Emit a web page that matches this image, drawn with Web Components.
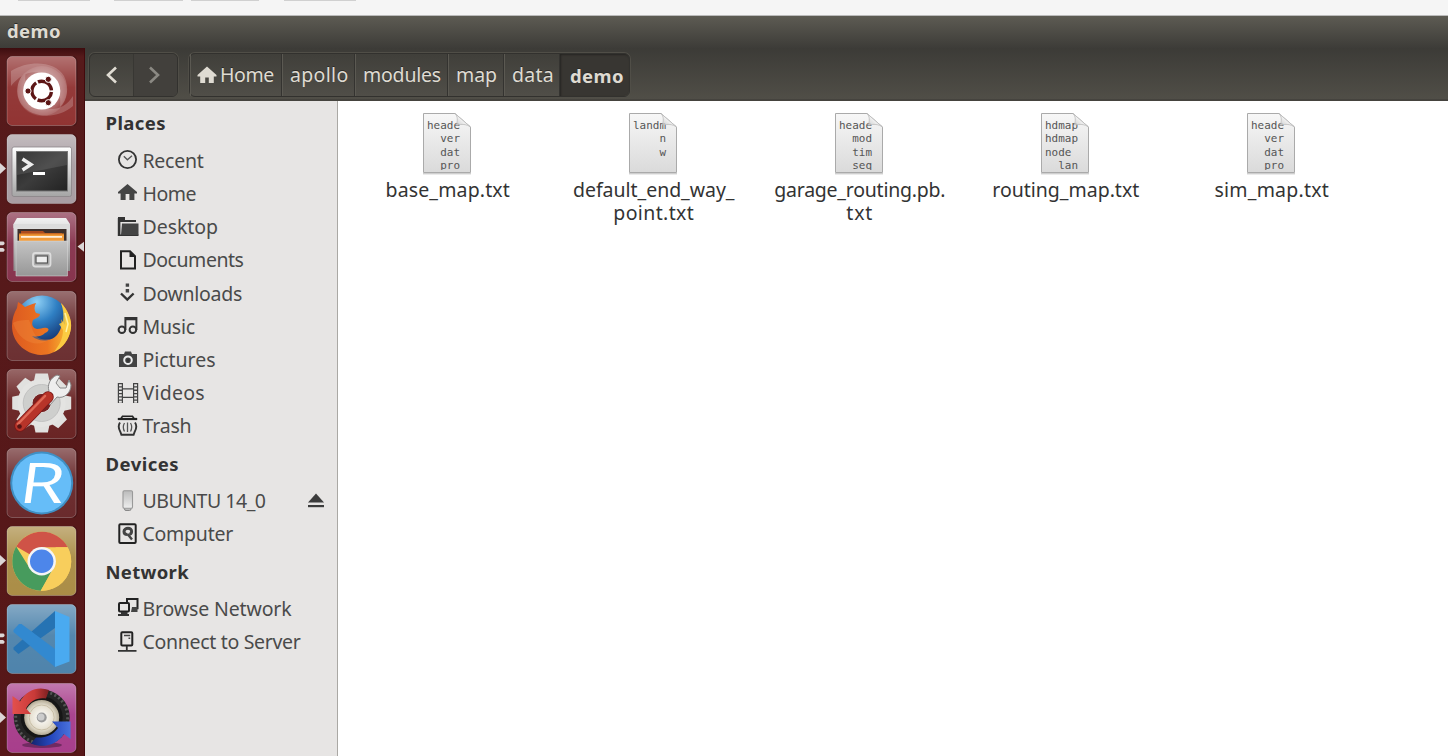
<!DOCTYPE html>
<html lang="en">
<head>
<meta charset="utf-8">
<title>demo</title>
<style>
html,body{margin:0;height:100%;overflow:hidden}
body{font-family:"Noto Sans","Open Sans",sans-serif}
</style>
</head>
<body>
<desktop-window></desktop-window>
<script>
const mount = (el, html) => { el.attachShadow({mode:"open"}).innerHTML = html; };

/* Label whose letter spacing is tuned so that its text takes a given width. */
class FitText extends HTMLElement {
  connectedCallback(){
    mount(this, `<style>:host{display:inline-block;white-space:pre;flex:none}span{display:inline-block}</style><span><slot></slot></span>`);
    const s = this.shadowRoot.querySelector("span");
    const want = parseFloat(this.getAttribute("w"));
    const n = this.textContent.length;
    const d = (want - s.getBoundingClientRect().width) / n;
    s.style.letterSpacing = d.toFixed(3) + "px";
  }
}

const SIDE = {
recent:`<circle cx="10.5" cy="10.5" r="8.6" fill="none" stroke="#333" stroke-width="1.8"/><path d="M6.8 7.2 10.4 10.8 15 6.8" fill="none" stroke="#555" stroke-width="1.3"/>`,
home:`<path d="M10.5 2 1 10v1.6h2.6V18h5v-6h3.8v6h5v-6.4H20V10Z" fill="#444"/>`,
desktop:`<path d="M1 1h7v3h11v2H3.4v13H1Z" fill="#333"/><path d="M1 19.2h20.5M1.6 2v18" stroke="#333" stroke-width="1.6"/><path d="M5 7.5h16.5V19H4Z" fill="#444"/>`,
documents:`<path d="M4 2.2h9l5 5V19.5H4Z" fill="none" stroke="#222" stroke-width="2"/><path d="M12.5 2v6H18Z" fill="#222"/>`,
downloads:`<path d="M4 11.5l6.3 6 6.3-6" fill="none" stroke="#333" stroke-width="2.4"/><path d="M8.7 1.5h3.4v3.2H8.7zM8.7 7h3.4v3.5H8.7z" fill="#444"/>`,
music:`<path d="M8.4 15V3h11v12M8.4 4.2h11" fill="none" stroke="#333" stroke-width="2"/><circle cx="4.9" cy="14.7" r="3.3" fill="none" stroke="#333" stroke-width="2"/><circle cx="15.9" cy="14.7" r="3.3" fill="none" stroke="#333" stroke-width="2"/>`,
pictures:`<path d="M2 5h5l1-2.5h6L15 5h5v13H2Z" fill="#444"/><circle cx="11" cy="11.2" r="3.8" fill="none" stroke="#eee" stroke-width="2"/><circle cx="11" cy="11.2" r="1.5" fill="#333"/>`,
videos:`<path d="M1.4 1v20M5.4 1v20M16.6 1v20M20.6 1v20M5.4 6.8h11M5.4 15.4h11" fill="none" stroke="#444" stroke-width="1.2"/><path d="M3.4 1v20M18.6 1v20" stroke="#444" stroke-width="3.2" stroke-dasharray="1.3 2"/>`,
trash:`<path d="M.800 4h19.400" stroke="#222" stroke-width="2.200"/><path d="M4 3.500 5.500 1.300h10L17 3.500" fill="none" stroke="#222" stroke-width="1.600"/><path d="M3 7.500c-1.800 2.600-1.600 6 .4 9.500l1 2.800h12.200l1-2.800c2-3.500 2.200-6.900.4-9.500" fill="none" stroke="#333" stroke-width="1.9"/><path d="M7.500 8q-2.400 4 0 8.500M10.500 7.500v9.500M13.500 8q2.400 4 0 8.500" fill="none" stroke="#555" stroke-width="1.3"/>`,
usb:`<defs><linearGradient id="u" x2="0" y2="1"><stop offset="0" stop-color="#bbb"/><stop offset="1" stop-color="#eee"/></linearGradient></defs><path d="M7.500 17h6.500v2q0 1.500-1.500 1.500H9q-1.500 0-1.500-1.500Z" fill="#bbb" stroke="#888"/><rect x="6" y="0.700" width="9.500" height="17.500" rx="1.300" fill="url(#u)" stroke="#999" stroke-width="1.100"/>`,
computer:`<rect x="2.300" y="1.300" width="16.400" height="18.800" rx="1" fill="none" stroke="#222" stroke-width="2"/><path d="M10.500 11.500c-2 0-3.500-1-3.500-3s2-3.300 4-3.300 3.800 1.500 3.600 3.500-1.500 2.600-2.400 2.600" fill="none" stroke="#444" stroke-width="3"/><path d="M10.500 11l4.500 5.500" stroke="#444" stroke-width="2.400"/>`,
browse:`<path d="M10 5V2h10.500v9.300H15" fill="none" stroke="#222" stroke-width="2"/><path d="M15 10h5.500v5H14z" fill="#444"/><rect x="2" y="6" width="10" height="8.500" rx="1" fill="none" stroke="#222" stroke-width="2"/><path d="M4 15h6.500v2H12v2H1v-2h3Z" fill="#333"/>`,
server:`<rect x="4.300" y="1.200" width="11" height="13.200" rx="1" fill="none" stroke="#222" stroke-width="2"/><path d="M7 4.500h4.500M11.500 4.500h1.700M11.500 7.300h1.700" stroke="#444" stroke-width="1.400"/><path d="M9.800 15v5M1 19.800h18.500" stroke="#333" stroke-width="1.800"/>`
};
class SideIcon extends HTMLElement {
  connectedCallback(){ mount(this, `<style>:host{display:block;width:22px;height:22px}svg{display:block}</style><svg width="22" height="22" viewBox="0 0 22 22">${SIDE[this.getAttribute("name")]}</svg>`); }
}

class SideRow extends HTMLElement {
  connectedCallback(){
    const eject = this.hasAttribute("eject") ? `<svg class="ej" width="18" height="17" viewBox="0 0 18 17"><path d="M9 .5 17 9.500H1Z" fill="#3c3c3c"/><path d="M1 12h16v2.200H1z" fill="#3c3c3c"/></svg>` : "";
    mount(this, `<style>:host{display:flex;align-items:center;height:33.240px;padding:0 12.500px 0 32px;color:#4a4a4a;font-size:19.500px;line-height:26px}
      side-icon{margin-right:3.500px;margin-top:-1px}.ej{margin-left:auto}</style>
      <side-icon name="${this.getAttribute("icon")}"></side-icon><fit-text w="${this.getAttribute("w")}">${this.textContent}</fit-text>${eject}`);
  }
}
class SideHeading extends HTMLElement {
  connectedCallback(){ mount(this, `<style>:host{display:flex;align-items:center;height:41.400px;padding-left:20.500px;font-weight:700;font-size:18.500px;color:#333;line-height:26px}</style><fit-text w="${this.getAttribute("w")}">${this.textContent}</fit-text>`); }
}
class PlacesSidebar extends HTMLElement {
  connectedCallback(){
    mount(this, `<style>:host{display:block;width:253px;flex:none;box-sizing:border-box;background:#e7e5e4;border-right:1px solid #aaa8a4;padding-top:1.600px}</style>
    <side-heading w="60.500">Places</side-heading>
    <side-row icon="recent" w="61">Recent</side-row>
    <side-row icon="home" w="53.500">Home</side-row>
    <side-row icon="desktop" w="75.500">Desktop</side-row>
    <side-row icon="documents" w="101">Documents</side-row>
    <side-row icon="downloads" w="99.500">Downloads</side-row>
    <side-row icon="music" w="52.500">Music</side-row>
    <side-row icon="pictures" w="73">Pictures</side-row>
    <side-row icon="videos" w="62.500">Videos</side-row>
    <side-row icon="trash" w="49">Trash</side-row>
    <side-heading w="73.500">Devices</side-heading>
    <side-row icon="usb" w="123" eject>UBUNTU 14_0</side-row>
    <side-row icon="computer" w="90.500">Computer</side-row>
    <side-heading w="83.500">Network</side-heading>
    <side-row icon="browse" w="149">Browse Network</side-row>
    <side-row icon="server" w="158">Connect to Server</side-row>`);
  }
}

const teeth = Array.from({length:8},(_,i)=>`<path d="M-8-21l1.800-8.500h12.400l1.800 8.500z" transform="rotate(${i*45})"/>`).join("");
const APPS = {
dash:`<defs><radialGradient id="a"><stop offset=".4" stop-color="#fff" stop-opacity=".65"/><stop offset="1" stop-color="#fff" stop-opacity=".12"/></radialGradient></defs>
<circle cx="35" cy="35" r="25" fill="url(#a)" opacity=".8"/>
<path d="M4 15C22 4 48 5 57 20c6 12 3 24-4 31 2-14-4-31-20-34C22 14 12 20 4 30ZM66 50C50 64 25 62 15 49 7 38 10 23 19 15c-3 15 3 31 18 37 12 3 22-1 29-12Z" fill="#fff" opacity=".2"/>
<circle cx="34.700" cy="35" r="18.600" fill="#fff"/><circle cx="34.700" cy="35" r="9.800" fill="none" stroke="#5c1515" stroke-width="3.400" stroke-dasharray="18.500 2.030" stroke-dashoffset="-1"/>
<g fill="#5c1515" stroke="#fff" stroke-width="1"><circle cx="21" cy="35" r="3.100"/><circle cx="41.300" cy="23.300" r="3.100"/><circle cx="41.300" cy="46.700" r="3.100"/></g>`,
terminal:`<defs><linearGradient id="a" x2="0" y2="1"><stop offset="0" stop-color="#fff"/><stop offset="1" stop-color="#a5a5a5"/></linearGradient><linearGradient id="b" x2="1" y2="1"><stop offset="0" stop-color="#222"/><stop offset=".5" stop-color="#3c3c3c"/><stop offset="1" stop-color="#222"/></linearGradient></defs>
<rect x="5" y="13" width="59.500" height="49.500" rx="2" fill="url(#a)" stroke="#8a8488" stroke-width=".8"/><rect x="9.500" y="17.500" width="51" height="39.500" fill="url(#b)" stroke="#777"/><path d="M10 41 60 31V18H10Z" fill="#fff" opacity=".1"/><path d="M15.500 25 24 30.500l-8.500 5.500" fill="none" stroke="#eee" stroke-width="3.400"/><path d="M26 39.500h12" stroke="#fff" stroke-width="3"/>`,
files:`<defs><linearGradient id="a" x2="0" y2="1"><stop offset="0" stop-color="#f2f2f2"/><stop offset="1" stop-color="#8b8b8b"/></linearGradient><linearGradient id="b" x2="0" y2="1"><stop offset="0" stop-color="#c4c4c4"/><stop offset="1" stop-color="#979797"/></linearGradient></defs>
<path d="M10 6h49l4 6v47H6.500V12Z" fill="url(#a)"/><path d="M6.500 12H63v4H6.500z" fill="#dcdcdc"/><path d="M10.500 17h49v14h-49z" fill="#3e302c"/><path d="M14 19h22l2 2h17v4H14z" fill="#ac4b1e"/><path d="M12 21.500h45v3H12z" fill="#e2862a"/><path d="M12 23h45v6H12z" fill="#f19c3c"/><path d="M14 24h41v1.700H14z" fill="#fff1dc"/><path d="M9 29h51.500v35H9z" fill="url(#b)" stroke="#ddd" stroke-width=".5"/><rect x="26" y="41" width="17.500" height="13.500" rx="2.500" fill="#aaa" stroke="#ddd" stroke-width="1.800"/><rect x="29" y="44" width="11.500" height="7" fill="#eee" stroke="#555" stroke-width="1.200"/>`,
firefox:`<defs><radialGradient id="a" cx=".4" cy=".12" r=".85"><stop offset="0" stop-color="#8fd0f5"/><stop offset=".45" stop-color="#2f7fc3"/><stop offset="1" stop-color="#102a66"/></radialGradient><linearGradient id="b" x1="0" y1="0" x2="1" y2="0"><stop offset="0" stop-color="#dd5a20"/><stop offset=".6" stop-color="#ec7521"/><stop offset="1" stop-color="#f9c235"/></linearGradient></defs>
<circle cx="35" cy="31" r="26.500" fill="url(#a)"/><path d="M54 12c7 7 11 17 10 25-2 16-15 27-30 27C17 63 5 50 5 35c0-7 2-13 5-18l1-6c2 1 5 3 7 5 4-2 7-3 11-4-2 4-2 7 0 10l4 1c0 3-4 4-7 6-2 5 0 8 4 9 4 0 6-2 10-1 3 1 1 4-2 5-4 4-9 4-13 3 7 7 22 6 27-4 3-5 3-9 2-13l4 6c1-8-1-15-4-22Z" fill="url(#b)"/><path d="M54 12c7 7 11 17 10 25-2 12-8 20-17 24 6-8 9-14 9-22l-4-6 4-2c1-7 0-14-2-19Z" fill="#fbd045" opacity=".85"/><path d="M58 22l3 11-2 8" fill="none" stroke="#fff3a5" stroke-width="1.500"/><path d="M6 32c5-3 12-3 16-3l4 11c4 9 10 9 17 8-11 9-30 5-37-16Z" fill="#f18a3d" opacity=".4"/>`,
settings:`<g transform="translate(34.700 34)" fill="#e1e1df">${teeth}</g><circle cx="34.700" cy="34" r="16.500" fill="none" stroke="#e4e4e2" stroke-width="15"/><circle cx="34.700" cy="34" r="14" fill="none" stroke="#cecfcd" stroke-width="9"/><circle cx="34.700" cy="34" r="18.500" fill="none" stroke="#bbb" stroke-width=".8"/><circle cx="34.700" cy="34" r="9" fill="#782222"/>
<path d="M42 22c-2-6 1-13 8-16l3 1-4 7 4 5h6l3-8 2 5c0 8-7 14-14 12l-7 8-6-5Z" fill="#eee" stroke="#888" stroke-width="1"/><path d="M41 28 13 57" stroke="#7b1717" stroke-width="11.500" stroke-linecap="round"/><path d="M41 28 13 57" stroke="#b73429" stroke-width="9.800" stroke-linecap="round"/><path d="M38 27 11 55" stroke="#df6a57" stroke-width="2.500" stroke-linecap="round"/><circle cx="12.500" cy="57.500" r="2.300" fill="#571414"/>`,
remote:`<circle cx="34.700" cy="35" r="31.500" fill="#3f8fc4"/><circle cx="34.700" cy="35" r="29.500" fill="#66bdf8"/><text x="0" y="0" transform="translate(10.500 55) scale(1.300 1) skewX(-6)" font-family="Open Sans,sans-serif" font-weight="400" font-size="56" fill="#fff">R</text>`,
chrome:`<g transform="translate(34.700 35.300)"><circle r="29.500" fill="#f8ce5c"/><path d="M0 0-25.500-14.700A29.500 29.500 0 0 1 26-14H0Z" fill="#cf5347"/><path d="M-25.500-14.700A29.500 29.500 0 0 0-1 29.500L12 7 0 0-12 7Z" fill="#479b5d"/><path d="M-1 29.500 12 6 14-14H26A29.500 29.500 0 0 1-1 29.500Z" fill="#f8ce5c"/><circle r="14.200" fill="#f5f5f5"/><circle r="11.700" fill="#4d86ea"/></g>`,
code:`<path d="M48 7 6.500 43.500v2l5 4.500L48 24Z" fill="#2673b3"/><path d="M12 20 6.500 26v2L48 63V45L14.500 20Z" fill="#3289d0"/><path d="M48 7 62.500 13v44.500L48 63Z" fill="#4aaaf0"/>`,
wheel:`<defs><radialGradient id="a"><stop offset="0" stop-color="#fff"/><stop offset=".7" stop-color="#e5dfcf"/><stop offset="1" stop-color="#b3aa94"/></radialGradient><linearGradient id="r" x2="1"><stop offset="0" stop-color="#e2504c"/><stop offset=".6" stop-color="#c93a38"/><stop offset="1" stop-color="#7a1f20"/></linearGradient><linearGradient id="b" x2="1"><stop offset="0" stop-color="#14246e"/><stop offset=".5" stop-color="#2547bd"/><stop offset="1" stop-color="#4a72dd"/></linearGradient></defs>
<ellipse cx="35" cy="62" rx="20" ry="3" fill="#3a1535" opacity=".5"/><circle cx="34.700" cy="34.500" r="28" fill="#252525"/><circle cx="34.700" cy="34.500" r="26" fill="none" stroke="#555" stroke-width="3" stroke-dasharray="2 2.500"/><circle cx="34.700" cy="34.500" r="21" fill="#161616"/><circle cx="34.700" cy="34.500" r="17.500" fill="url(#a)"/><circle cx="34.700" cy="34.500" r="12.500" fill="none" stroke="#c8bea6"/><circle cx="34.700" cy="34.500" r="5" fill="#999"/><circle cx="34" cy="34" r="3.500" fill="#ccc"/>
<path d="M42 7C31 3 20 7 13 18.500L5.500 13V31H24l-5-5.500C23 18 30 14 39 15.500Z" fill="url(#r)"/><path d="M63.500 38.500H45l6 6.500c-5 7-12 10-22 9.500l-5 6c12 5 25 2 33-9.500l6.500 5Z" fill="url(#b)"/>`
};
class LauncherTile extends HTMLElement {
  connectedCallback(){
    const run = this.getAttribute("run");
    const left = run==="1" ? `<path d="M0 29v11l6-5.500Z" fill="#dcd6d6"/>` : run==="2" ? `<path d="M0 29.500h3.500q2.500 2-.5 3.800H0zM0 36h3q3 1.800.5 3.800H0z" fill="#dcd6d6"/>` : "";
    const right = this.hasAttribute("focused") ? `<path d="M85 29v11.500L77.500 34.500Z" fill="#dcd6d6"/>` : "";
    mount(this, `<style>:host{display:block;width:85px;height:70px;flex:none}svg{display:block}</style>
    <svg width="85" height="70" viewBox="0 0 85 70"><defs><linearGradient id="sh" x2="0" y2="1"><stop offset="0" stop-color="#fff" stop-opacity=".32"/><stop offset=".45" stop-color="#fff" stop-opacity=".05"/><stop offset="1" stop-color="#fff" stop-opacity=".02"/></linearGradient></defs>
    <rect x="6" y="-.5" width="71.500" height="71" rx="6" fill="#2d0709" opacity=".4"/><rect x="7" y=".500" width="69" height="69" rx="5" fill="${this.getAttribute("tint")}"/><rect x="7" y=".500" width="69" height="69" rx="5" fill="url(#sh)" stroke="#fff" stroke-opacity=".25"/>
    <g transform="translate(7 0)">${APPS[this.getAttribute("app")]}</g>${left}${right}</svg>`);
  }
}
class AppLauncher extends HTMLElement {
  connectedCallback(){
    mount(this, `<style>:host{display:flex;flex-direction:column;gap:8.400px;width:85px;box-sizing:border-box;border-right:1px solid #43090c;flex:none;padding-top:7.700px;background:linear-gradient(#3c0d0f,#561a1b 9px,#571718);overflow:hidden}</style>
    <launcher-tile app="dash" tint="#8f302f"></launcher-tile>
    <launcher-tile app="terminal" tint="#a79ca1" run="1"></launcher-tile>
    <launcher-tile app="files" tint="#85304a" run="2" focused></launcher-tile>
    <launcher-tile app="firefox" tint="#692c2e"></launcher-tile>
    <launcher-tile app="settings" tint="#672020"></launcher-tile>
    <launcher-tile app="remote" tint="#672628"></launcher-tile>
    <launcher-tile app="chrome" tint="#a98b43" run="1"></launcher-tile>
    <launcher-tile app="code" tint="#4b81aa" run="2"></launcher-tile>
    <launcher-tile app="wheel" tint="#a63a89" run="1"></launcher-tile>`);
  }
}

class PathCrumb extends HTMLElement {
  connectedCallback(){
    const home = this.hasAttribute("home") ? `<svg width="20" height="18" viewBox="0 0 20 18"><path d="M10 .5.500 9v1.500h2.700V17h5v-5.500h3.600V17h5v-6.500h2.700V9Z" fill="#dfdbd2"/></svg>` : "";
    mount(this, `<style>:host{display:flex;align-items:center;box-sizing:border-box;height:100%;padding-left:8px;border-right:1px solid #343330;box-shadow:inset 1px 0 #5b5952;color:#dfdbd2;font-size:19.500px;line-height:26px;text-shadow:0 -1px #2b2a27}
    :host([current]){font-weight:700;background:#383632;border:0;box-shadow:inset 1px 1px 2px #262522;border-radius:0 5px 5px 0;padding-left:10px;font-size:18.500px}fit-text{margin-top:-1px}:host([current]) fit-text{margin-top:1px}svg{margin-right:3px;margin-left:-1px}</style>${home}<fit-text w="${this.getAttribute("w")}">${this.textContent}</fit-text>`);
  }
}
class FileToolbar extends HTMLElement {
  connectedCallback(){
    mount(this, `<style>:host{display:flex;height:53px;box-sizing:border-box;padding:5px 0 0 4px;gap:11px;background:linear-gradient(#3c3b37,#504e47);border-bottom:2px solid #45433e;flex:none}
    .g{display:flex;height:44px;box-sizing:border-box;border:1px solid #32312e;border-radius:6px;background:linear-gradient(#403f3a,#504e48);box-shadow:0 0 0 1px #504e47}
    .n{width:43px;display:flex;align-items:center;justify-content:center;box-sizing:border-box}.n+.n{width:44px;background:#42403c;border-left:1px solid #383733;border-radius:0 5px 5px 0}.n svg{margin-left:-2px}
    .c1{width:92px}.c2{width:73px}.c3{width:93px}.c4{width:56px}.c5{width:56px}.c6{width:69px}</style>
    <div class="g"><div class="n"><svg width="14" height="18" viewBox="0 0 14 18"><path d="M12 1.500 4 9l8 7.500" fill="none" stroke="#e0dcd3" stroke-width="2.600"/></svg></div><div class="n"><svg width="14" height="18" viewBox="0 0 14 18"><path d="M2 1.500 10 9l-8 7.500" fill="none" stroke="#8b8983" stroke-width="2.600"/></svg></div></div>
    <div class="g"><path-crumb class="c1" home w="54">Home</path-crumb><path-crumb class="c2" w="58.500">apollo</path-crumb><path-crumb class="c3" w="78">modules</path-crumb><path-crumb class="c4" w="41">map</path-crumb><path-crumb class="c5" w="42">data</path-crumb><path-crumb class="c6" current w="54">demo</path-crumb></div>`);
  }
}

class TextFile extends HTMLElement {
  connectedCallback(){
    const names = this.getAttribute("name").split("|"), ws = this.getAttribute("w").split("|");
    mount(this, `<style>:host{display:flex;flex-direction:column;align-items:center;width:206px;flex:none;color:#333;font-size:19.500px}
    .page{display:grid;width:50px;height:63px;margin-bottom:3px}.page>*{grid-area:1/1}
    pre{margin:7.500px 0 0 5px;width:34px;height:51px;overflow:hidden;font:10.960px/13.300px "DejaVu Sans Mono",monospace;color:#555}
    .corner{z-index:1}.l{display:flex;flex-direction:column;align-items:center;padding-left:1.500px}fit-text{line-height:23px}</style>
    <div class="page"><svg width="50" height="63" viewBox="0 0 50 63"><defs><linearGradient id="p" x2="0" y2="1"><stop offset="0" stop-color="#f7f7f7"/><stop offset="1" stop-color="#dadada"/></linearGradient></defs><path d="M1 61.800h48" stroke="#bbb"/><path d="M1.500 1.500H33L48.500 15v45.500h-47Z" fill="url(#p)" stroke="#aaa"/></svg>
    <pre>${this.getAttribute("preview").replace(/\|/g,"\n")}</pre>
    <svg class="corner" width="50" height="63" viewBox="0 0 50 63"><defs><linearGradient id="q" x1="1" y1="0" x2="0" y2="1"><stop offset=".4" stop-color="#fff"/><stop offset="1" stop-color="#bbb" stop-opacity=".6"/></linearGradient></defs><path d="M33 1.500c3 3 2.500 7 1.500 11.500 5-1 10-1 14 2Z" fill="url(#q)" stroke="#bbb" stroke-width=".8"/></svg></div>
    <div class="l">${names.map((n,i)=>`<fit-text w="${ws[i]}">${n}</fit-text>`).join("")}</div>`);
  }
}
class FileGrid extends HTMLElement {
  connectedCallback(){
    mount(this, `<style>:host{display:flex;flex:1;background:#fff;padding:10.600px 0 0 6px;min-width:0;align-items:flex-start}</style>
    <text-file name="base_map.txt" w="124.500" preview="heade|  ver|  dat|  pro"></text-file>
    <text-file name="default_end_way_|point.txt" w="161.500|81" preview="landm|    n|    w"></text-file>
    <text-file name="garage_routing.pb.|txt" w="171|27" preview="heade|  mod|  tim|  seq"></text-file>
    <text-file name="routing_map.txt" w="147" preview="hdmap|hdmap|node|  lan"></text-file>
    <text-file name="sim_map.txt" w="114.500" preview="heade|  ver|  dat|  pro"></text-file>`);
  }
}

class DesktopWindow extends HTMLElement {
  connectedCallback(){
    mount(this, `<style>:host{display:flex;flex-direction:column;width:1448px;height:756px;overflow:hidden}
    .strip{display:flex;height:15.500px;box-sizing:border-box;background:#f5f5f5;border-bottom:1px solid #bbb;padding-left:18px;flex:none}
    .strip i{height:1px;background:#d0d0d0}
    .title{display:flex;align-items:center;height:32.500px;box-sizing:border-box;background:linear-gradient(#5d5b53,#3d3c38);padding:0 0 2px 7px;font-weight:700;font-size:18.500px;line-height:26px;color:#dfdbd2;flex:none;text-shadow:0 -1px #2b2a27}
    .body{display:flex;flex:1;min-height:0}.win{display:flex;flex-direction:column;flex:1;min-width:0}.content{display:flex;flex:1;min-height:0}</style>
    <div class="strip"><i style="width:72px"></i><i style="width:69px;margin-left:24px"></i><i style="width:68px;margin-left:8px"></i><i style="width:72px;margin-left:25px"></i></div>
    <div class="title"><fit-text w="54">demo</fit-text></div>
    <div class="body"><app-launcher></app-launcher><div class="win"><file-toolbar></file-toolbar><div class="content"><places-sidebar></places-sidebar><file-grid></file-grid></div></div></div>`);
  }
}

customElements.define("fit-text", FitText);
customElements.define("side-icon", SideIcon);
customElements.define("side-row", SideRow);
customElements.define("side-heading", SideHeading);
customElements.define("places-sidebar", PlacesSidebar);
customElements.define("launcher-tile", LauncherTile);
customElements.define("app-launcher", AppLauncher);
customElements.define("path-crumb", PathCrumb);
customElements.define("file-toolbar", FileToolbar);
customElements.define("text-file", TextFile);
customElements.define("file-grid", FileGrid);
customElements.define("desktop-window", DesktopWindow);
</script>
</body>
</html>
